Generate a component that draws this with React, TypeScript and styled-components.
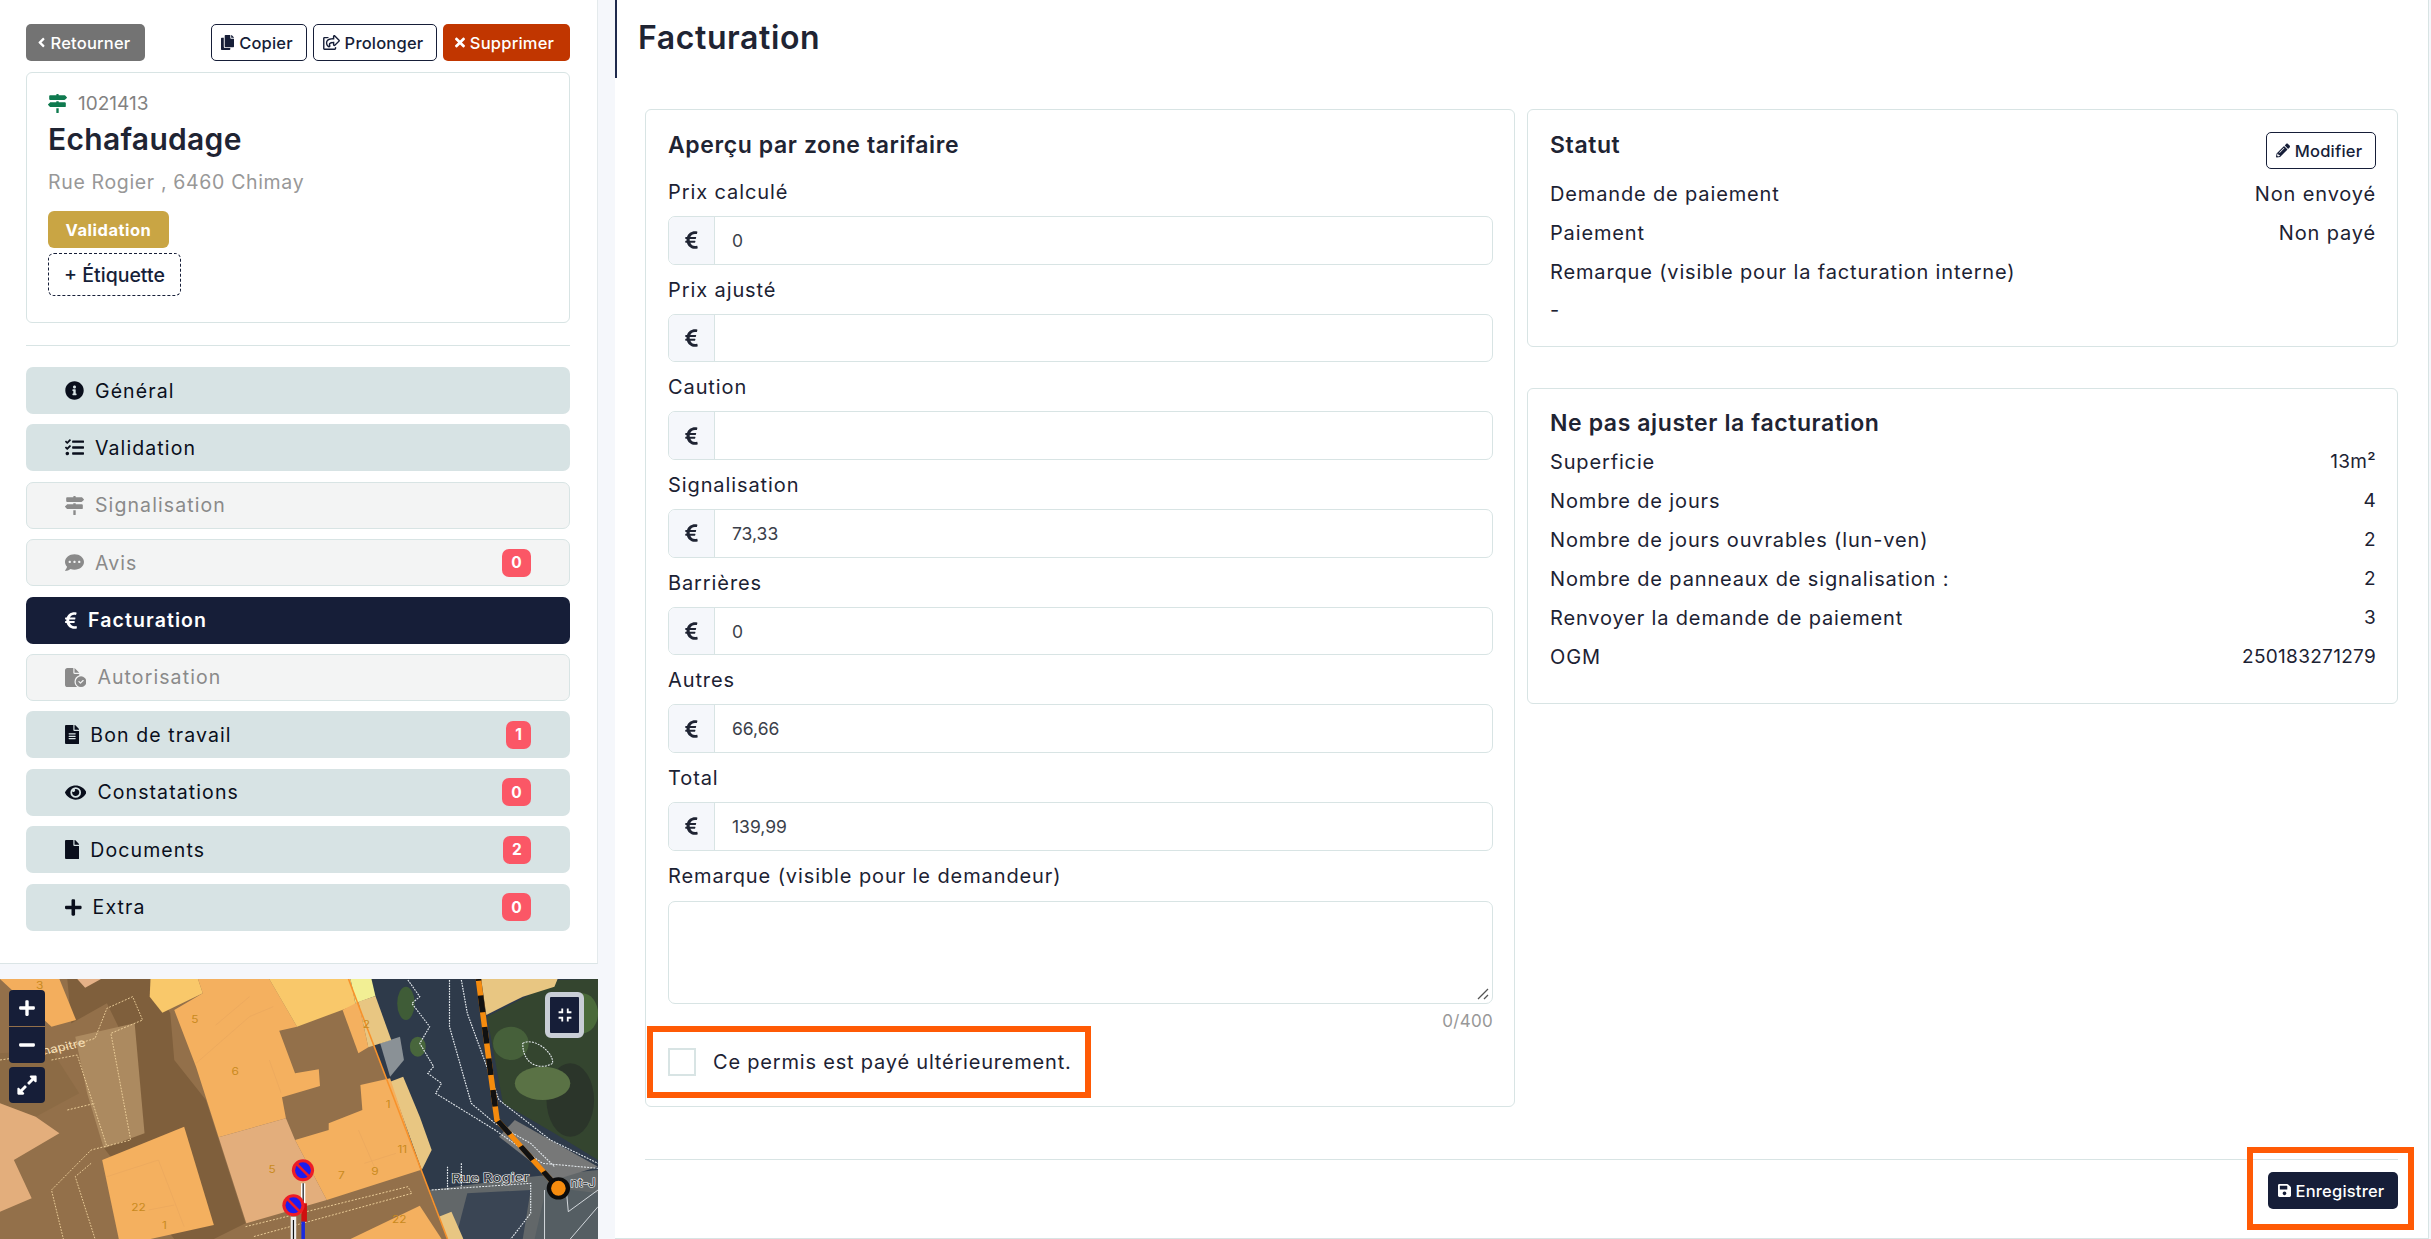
import React from "react";
import styled, { createGlobalStyle } from "styled-components";
import {
  FaAngleLeft, FaCopy, FaRegShareSquare, FaTimes, FaMapSigns, FaInfoCircle, FaTasks,
  FaCommentDots, FaEuroSign, FaFileAlt, FaEye, FaFile, FaPlus, FaMinus, FaSave, FaPencilAlt, FaExpandAlt,
} from "react-icons/fa";
import { FaFileCircleCheck } from "react-icons/fa6";
import { MdFullscreenExit } from "react-icons/md";

const Global = createGlobalStyle`
  html, body { margin: 0; padding: 0; }
  body { font-family: Inter, "Liberation Sans", sans-serif; color: #1c2233; background: #f5f7fb; }
  * { box-sizing: border-box; }
`;

const Page = styled.div`
  display: flex;
  width: 2431px;
  height: 1239px;
  overflow: hidden;
  background: #f5f7fb;
`;
const Sidebar = styled.aside`
  width: 598px;
  flex: none;
  display: flex;
  flex-direction: column;
  gap: 15px;
`;
const SideTop = styled.div`
  height: 964px;
  background: #fff;
  padding: 24px 27px 0 26px;
  border-bottom: 1px solid #dbe5e6;
  border-right: 1px solid #e4eaec;
`;
const TopBar = styled.div`
  display: flex;
  justify-content: space-between;
  align-items: center;
  height: 37px;
`;
const BtnGroup = styled.div`
  display: flex;
  gap: 6px;
`;
const Btn = styled.button<{ $w: number; $iw: number; $kind: "gray" | "outline" | "danger" | "navy" }>`
  width: ${(p) => p.$w}px;
  height: 37px;
  display: inline-flex;
  align-items: center;
  justify-content: center;
  gap: 5px;
  padding: 0 4px 0 0;
  border-radius: 5px;
  font: 500 16.5px Inter, sans-serif;
  letter-spacing: 0.2px;
  white-space: nowrap;
  border: 1px solid ${(p) => (p.$kind === "outline" ? "#161e38" : "transparent")};
  color: ${(p) => (p.$kind === "outline" ? "#161e38" : "#fff")};
  background: ${(p) =>
    p.$kind === "gray" ? "#737373" : p.$kind === "danger" ? "#c13600" : p.$kind === "navy" ? "#161e38" : "#fff"};
  svg { width: ${(p) => p.$iw}px; height: 15px; flex: none; }
`;
const StatusBtnSlot = styled.div`
  margin-top: 5px;
`;
const InfoCard = styled.section`
  margin-top: 11px;
  height: 251px;
  border: 1px solid #d8e4e4;
  border-radius: 6px;
  padding: 17px 21px;
`;
const IdLine = styled.div`
  display: flex;
  align-items: center;
  gap: 11px;
  height: 26px;
  font-size: 19px;
  color: #828282;
  svg { color: #0f7a4f; width: 19px; height: 19px; }
`;
const ItemTitle = styled.h2`
  margin: 3px 0 0;
  font-size: 30px;
  line-height: 40px;
  letter-spacing: 0.3px;
  font-weight: 600;
  color: #1f2433;
`;
const Address = styled.div`
  margin-top: 8px;
  font-size: 19.5px;
  line-height: 30px;
  letter-spacing: 0.65px;
  color: #989898;
`;
const StatusPill = styled.div`
  margin-top: 14px;
  width: 121px;
  height: 37px;
  border-radius: 6px;
  background: #c9a544;
  color: #fff;
  font-size: 16.5px;
  letter-spacing: 0.5px;
  font-weight: 700;
  display: flex;
  align-items: center;
  justify-content: center;
`;
const TagBtn = styled.div`
  margin-top: 5px;
  width: 133px;
  height: 43px;
  border: 1px dashed #161e38;
  border-radius: 6px;
  font-size: 19.5px;
  font-weight: 500;
  color: #161e38;
  display: flex;
  align-items: center;
  justify-content: center;
`;
const Rule = styled.hr`
  margin: 22px 0 21px;
  border: 0;
  border-top: 1px solid #d8e4e4;
`;
const Nav = styled.nav`
  display: flex;
  flex-direction: column;
  gap: 10.4px;
`;
const NavItem = styled.div<{ $state: "on" | "off" | "active" }>`
  height: 47px;
  display: flex;
  align-items: center;
  gap: 11px;
  padding: 0 38px;
  border-radius: 7px;
  font-size: 19.5px;
  letter-spacing: 1.1px;
  font-weight: ${(p) => (p.$state === "active" ? 600 : 400)};
  color: ${(p) => (p.$state === "active" ? "#fff" : p.$state === "off" ? "#8a8a8a" : "#0a0f1c")};
  background: ${(p) => (p.$state === "active" ? "#161e38" : p.$state === "off" ? "#f3f4f4" : "#d7e3e4")};
  border: 1px solid ${(p) => (p.$state === "off" ? "#d8e4e4" : "transparent")};
`;
const NavIcon = styled.span<{ $w: number }>`
  flex: none;
  display: flex;
  width: ${(p) => p.$w}px;
  svg { width: 100%; height: 19px; }
`;
const NavLabel = styled.span`
  flex: 1;
`;
const Badge = styled.span<{ $w: number }>`
  width: ${(p) => p.$w}px;
  height: 28px;
  border-radius: 7px;
  background: #fb5766;
  color: #fff;
  font-size: 15.5px;
  font-weight: 700;
  letter-spacing: 0;
  display: flex;
  align-items: center;
  justify-content: center;
`;
const MapBox = styled.div`
  position: relative;
  flex: 1;
  overflow: hidden;
  svg.map { display: block; width: 100%; height: 100%; }
`;
const ZoomStack = styled.div`
  position: absolute;
  left: 9px;
  top: 11px;
  display: flex;
  flex-direction: column;
`;
const MapBtn = styled.div<{ $gap?: number; $round?: string; $icon?: number }>`
  width: 36px;
  height: 36px;
  background: #161e38;
  color: #fff;
  display: flex;
  align-items: center;
  justify-content: center;
  font-size: ${(p) => p.$icon ?? 18}px;
  margin-top: ${(p) => p.$gap ?? 0}px;
  border-radius: ${(p) => p.$round ?? "4px"};
`;
const CompressBtn = styled.div`
  position: absolute;
  left: 545px;
  top: 13px;
  width: 39px;
  height: 46px;
  border: 5px solid #c9ced6;
  border-radius: 6px;
  background: #161e38;
  color: #fff;
  display: flex;
  align-items: center;
  justify-content: center;
  font-size: 22px;
`;

const Main = styled.main`
  position: relative;
  margin-left: 17px;
  width: 1814px;
  height: 1239px;
  background: #fff;
  border-right: 1px solid #d8e4e4;
  border-bottom: 1px solid #d8e4e4;
  padding: 0 30px 0 30px;
  &::before {
    content: "";
    position: absolute;
    left: 0;
    top: 0;
    width: 2px;
    height: 78px;
    background: #1f2a4d;
  }
`;
const PageTitle = styled.h1`
  margin: 0 0 0 -7px;
  height: 109px;
  padding-top: 18px;
  font-size: 32px;
  line-height: 40px;
  letter-spacing: 0.6px;
  font-weight: 600;
  color: #1f2433;
`;
const Columns = styled.div`
  display: grid;
  grid-template-columns: 870px 871px;
  gap: 12px;
  align-items: start;
  height: 998px;
`;
const Stack = styled.div`
  display: flex;
  flex-direction: column;
  gap: 41px;
`;
const Card = styled.section<{ $h: number; $pt?: number }>`
  height: ${(p) => p.$h}px;
  border: 1px solid #d8e4e4;
  border-radius: 6px;
  padding: ${(p) => p.$pt ?? 17}px 21px 0 22px;
`;
const CardTitle = styled.h3<{ $mb?: number }>`
  margin: 0 0 ${(p) => p.$mb ?? 0}px;
  font-size: 23px;
  line-height: 36px;
  letter-spacing: 0.6px;
  font-weight: 600;
  color: #1f2433;
`;
const Field = styled.div`
  margin-bottom: 9px;
`;
const Label = styled.label<{ $mb?: number }>`
  display: block;
  height: 30px;
  margin-bottom: ${(p) => p.$mb ?? 10}px;
  font-size: 20px;
  line-height: 32px;
  letter-spacing: 0.9px;
`;
const InputGroup = styled.div`
  display: flex;
  height: 48.7px;
  border: 1px solid #d8e4e4;
  border-radius: 7px;
  overflow: hidden;
`;
const Addon = styled.div`
  width: 46px;
  flex: none;
  background: #f5f7fb;
  border-right: 1px solid #d8e4e4;
  display: flex;
  align-items: center;
  justify-content: center;
  color: #1f2433;
  svg { width: 13px; height: 20px; }
`;
const Value = styled.div`
  flex: 1;
  display: flex;
  align-items: center;
  padding-left: 17px;
  font-size: 17.5px;
  color: #3b3f4a;
`;
const TextArea = styled.div`
  position: relative;
  height: 103px;
  margin-top: 11px;
  border: 1px solid #d8e4e4;
  border-radius: 7px;
  svg { position: absolute; right: 2px; bottom: 2px; }
`;
const Counter = styled.div`
  text-align: right;
  margin-top: 5px;
  font-size: 17px;
  line-height: 24px;
  color: #989898;
  letter-spacing: 0.3px;
`;
const CheckRow = styled.div`
  position: relative;
  display: flex;
  align-items: center;
  gap: 17px;
  height: 28px;
  margin-top: 15px;
  font-size: 20px;
  letter-spacing: 0.8px;
`;
const CheckBox = styled.span`
  width: 28px;
  height: 28px;
  border: 2px solid #d8e4e4;
`;
const Highlight = styled.div<{ $l: number; $t: number; $w: number; $h: number }>`
  position: absolute;
  left: ${(p) => p.$l}px;
  top: ${(p) => p.$t}px;
  width: ${(p) => p.$w}px;
  height: ${(p) => p.$h}px;
  border: 6px solid #ff5a05;
  pointer-events: none;
`;
const StatHead = styled.div`
  display: flex;
  justify-content: space-between;
  align-items: flex-start;
  height: 47px;
`;
const Row = styled.div<{ $h?: number }>`
  display: flex;
  justify-content: space-between;
  align-items: center;
  height: ${(p) => p.$h ?? 39}px;
  font-size: 20px;
  letter-spacing: 0.85px;
`;
const Figure = styled.span`
  font-size: 19px;
  letter-spacing: 0.3px;
`;
const Footer = styled.div`
  position: relative;
  margin-top: 52px;
  border-top: 1px solid #d8e4e4;
  padding-top: 12px;
  display: flex;
  justify-content: flex-end;
`;

const fields: [string, string][] = [
  ["Prix calculé", "0"],
  ["Prix ajusté", ""],
  ["Caution", ""],
  ["Signalisation", "73,33"],
  ["Barrières", "0"],
  ["Autres", "66,66"],
  ["Total", "139,99"],
];
const nav = [
  { l: "Général", i: <FaInfoCircle />, iw: 19, s: "on" },
  { l: "Validation", i: <FaTasks />, iw: 19, s: "on" },
  { l: "Signalisation", i: <FaMapSigns />, iw: 19, s: "off" },
  { l: "Avis", i: <FaCommentDots />, iw: 19, s: "off", b: "0", w: 29 },
  { l: "Facturation", i: <FaEuroSign />, iw: 12, s: "active" },
  { l: "Autorisation", i: <FaFileCircleCheck />, iw: 21.4, s: "off" },
  { l: "Bon de travail", i: <FaFileAlt />, iw: 14.3, s: "on", b: "1", w: 25 },
  { l: "Constatations", i: <FaEye />, iw: 21.4, s: "on", b: "0", w: 29 },
  { l: "Documents", i: <FaFile />, iw: 14.3, s: "on", b: "2", w: 28 },
  { l: "Extra", i: <FaPlus />, iw: 16.6, s: "on", b: "0", w: 29 },
] as const;

const MapArt = () => (
  <svg className="map" viewBox="0 57 1510 780" preserveAspectRatio="none">
    <rect x="0" y="57" width="1510" height="780" fill="#2e3a4a" />
    <polygon points="1230,170 1410,60 1510,57 1510,600 1400,520 1270,430" fill="#34452f" />
    <ellipse cx="1440" cy="420" rx="60" ry="110" fill="#2b352a" />
    <ellipse cx="1370" cy="370" rx="70" ry="50" fill="#5a7245" />
    <ellipse cx="1290" cy="250" rx="45" ry="50" fill="#46603a" />
    <ellipse cx="1470" cy="160" rx="40" ry="60" fill="#4a6a3a" />
    <ellipse cx="1025" cy="130" rx="22" ry="50" fill="#3f5c37" />
    <ellipse cx="1055" cy="260" rx="20" ry="30" fill="#48663c" />
    <polygon points="960,250 1010,230 1020,300 985,350" fill="#8a9196" />
    <polygon points="1085,690 1340,650 1510,630 1510,837 1300,837 1130,837" fill="#626769" />
    <polygon points="1300,480 1510,620 1400,660 1260,530" fill="#777878" />
    <polygon points="1380,680 1510,700 1510,837 1350,837" fill="#555e63" />
    <polygon points="1180,700 1340,690 1320,837 1150,837" fill="#3a4554" />
    <polygon points="0,57 880,57 1130,837 0,837" fill="#93704a" />
    <polygon points="170,57 380,57 430,160 440,300 520,420 620,790 540,837 440,837 260,560 350,500 340,300 270,130 180,190" fill="#7f5f3c" />
    <polygon points="190,230 340,190 365,520 262,565 220,400" fill="#ac8a60" />
    <polygon points="0,280 130,270 200,400 90,470 0,430" fill="#8c6b45" />
    <polygon points="0,57 150,57 192,180 130,200" fill="#f3ae5d" />
    <polygon points="195,57 255,57 215,83" fill="#e5b187" />
    <polygon points="380,57 500,57 512,100 410,158 378,110" fill="#f9c86a" />
    <polygon points="440,150 512,100 500,57 680,57 750,200 705,212 745,340 805,328 808,378 712,412 722,475 552,532 495,320" fill="#f4b05f" />
    <polygon points="680,57 885,57 898,135 750,200" fill="#f9c86a" />
    <polygon points="885,57 938,57 948,108 898,130" fill="#f2ef94" />
    <polygon points="905,125 948,108 988,240 930,262" fill="#e8c682" />
    <polygon points="865,150 905,125 930,262 905,280" fill="#f4b05f" />
    <polygon points="985,365 1018,350 1060,470 1090,570 1065,630" fill="#e8c682" />
    <polygon points="910,375 985,355 1062,630 825,720 745,540 830,510 830,490 915,450" fill="#f4b05f" />
    <polygon points="552,532 722,475 745,540 825,720 622,790" fill="#e3ae7c" />
    <polygon points="0,430 90,470 150,520 35,600 80,715 0,755" fill="#e3ae7c" />
    <polygon points="258,600 465,500 540,795 380,837 300,837" fill="#f4b05f" />
    <polygon points="885,837 1060,737 1115,837" fill="#f4b05f" />
    <polygon points="1108,770 1140,755 1170,837 1130,837" fill="#e8c682" />
    <polygon points="1215,57 1408,57 1400,80 1320,110 1228,165" fill="#e8c682" />
    <g fill="none" stroke="#e8a55d" strokeWidth="1.5">
      <path d="M495,310 L630,170 L690,140 M545,195 L630,110 M680,300 L710,400 M905,510 L945,620 M920,610 L1000,580" />
      <path d="M270,650 L400,600 L465,800 M375,750 L440,735" />
    </g>
    <g fill="none" stroke="#f2d49e" strokeWidth="2.5" strokeDasharray="5 4">
      <path d="M0,300 L120,280 L240,235 L270,145 L335,110 L360,180 L280,220 L330,540 L230,570 L130,690 L160,837" />
      <path d="M130,300 L195,285 L270,560 M170,450 L240,430 M230,610 L190,650 L240,837" />
      <path d="M620,800 L1030,680 L1040,700 L640,830" />
    </g>
    <g fill="none" stroke="#e6ebef" strokeWidth="3" strokeDasharray="5 3">
      <path d="M1030,60 L1060,110 L1040,130 L1085,200 L1060,250 L1095,320 L1080,340 L1115,370 L1100,400 L1250,510 L1370,610 L1510,625" />
      <path d="M1135,60 L1135,200 L1190,430 L1250,490 L1340,550 L1400,620" />
      <path d="M1165,60 L1180,160 L1260,420 L1390,540 L1510,610" />
      <path d="M1320,250 C1350,230 1400,280 1395,310 C1370,330 1320,320 1320,250 Z" />
      <path d="M1130,620 L1130,690 M1165,610 L1165,680 M1090,690 L1340,670 L1340,760 L1290,837" />
    </g>
    <g fill="none" stroke="#dfe4e8" strokeWidth="2.5">
      <path d="M1435,755 L1510,690 M1435,755 L1430,690 M1375,837 L1375,690 M1440,837 L1510,740" />
    </g>
    <line x1="880" y1="57" x2="1130" y2="837" stroke="#f8922b" strokeWidth="4" />
    <polyline points="1208,57 1240,350 1255,480 1410,685" fill="none" stroke="#f58b0e" strokeWidth="14" />
    <polyline points="1208,57 1240,350 1255,480 1410,685" fill="none" stroke="#111" strokeWidth="14" strokeDasharray="50 45" strokeDashoffset="-50" />
    <g fontFamily="Inter, sans-serif" fill="#c98a20" fontSize="30">
      <text x="100" y="86" textAnchor="middle">3</text>
      <text x="492" y="188" textAnchor="middle">5</text>
      <text x="594" y="346" textAnchor="middle">6</text>
      <text x="925" y="204" textAnchor="middle">2</text>
      <text x="980" y="444" textAnchor="middle">1</text>
      <text x="1016" y="579" textAnchor="middle">11</text>
      <text x="687" y="638" textAnchor="middle">5</text>
      <text x="862" y="658" textAnchor="middle">7</text>
      <text x="947" y="644" textAnchor="middle">9</text>
      <text x="350" y="752" textAnchor="middle">22</text>
      <text x="415" y="807" textAnchor="middle">1</text>
      <text x="1008" y="790" textAnchor="middle">22</text>
    </g>
    <text x="110" y="285" fontFamily="Inter, sans-serif" fontSize="34" fill="#f6dfb5" transform="rotate(-14 110 285)">hapitre</text>
    <text x="1140" y="668" fontFamily="Inter, sans-serif" fontSize="38" fontWeight="500" fill="#3a3f44" stroke="#fff" strokeWidth="3" paintOrder="stroke" transform="rotate(-1 1140 668)">Rue Rogier</text>
    <text x="1440" y="682" fontFamily="Inter, sans-serif" fontSize="34" fill="#3a3f44" stroke="#fff" strokeWidth="3" paintOrder="stroke">nt-J</text>
    <rect x="760" y="670" width="11" height="60" fill="#fff" />
    <line x1="765.5" y1="670" x2="765.5" y2="725" stroke="#111" strokeWidth="3" />
    <rect x="761" y="730" width="14" height="55" fill="#d01010" />
    <rect x="761" y="785" width="9" height="52" fill="#1a2ae0" />
    <rect x="734" y="770" width="14" height="67" fill="#eee" />
    <line x1="741" y1="780" x2="741" y2="837" stroke="#111" strokeWidth="3" />
    {[[765, 631], [741, 736]].map(([x, y]) => (
      <g key={x}>
        <ellipse cx={x} cy={y} rx="28" ry="33" fill="#ee1c25" />
        <ellipse cx={x} cy={y} rx="20" ry="24" fill="#1c1cf0" />
        <line x1={x - 15} y1={y - 18} x2={x + 15} y2={y + 18} stroke="#ee1c25" strokeWidth="7" />
      </g>
    ))}
    <ellipse cx="1410" cy="685" rx="24" ry="28" fill="#f58b0e" stroke="#0c0c0c" strokeWidth="11" />
  </svg>
);

export default function App() {
  return (
    <Page>
      <Global />
      <Sidebar>
        <SideTop>
          <TopBar>
            <Btn $w={119} $iw={9} $kind="gray">
              <FaAngleLeft /> Retourner
            </Btn>
            <BtnGroup>
              <Btn $w={96} $iw={13} $kind="outline">
                <FaCopy /> Copier
              </Btn>
              <Btn $w={124} $iw={17} $kind="outline">
                <FaRegShareSquare /> Prolonger
              </Btn>
              <Btn $w={127} $iw={10} $kind="danger">
                <FaTimes /> Supprimer
              </Btn>
            </BtnGroup>
          </TopBar>
          <InfoCard>
            <IdLine>
              <FaMapSigns /> 1021413
            </IdLine>
            <ItemTitle>Echafaudage</ItemTitle>
            <Address>Rue Rogier , 6460 Chimay</Address>
            <StatusPill>Validation</StatusPill>
            <TagBtn>+ Étiquette</TagBtn>
          </InfoCard>
          <Rule />
          <Nav>
            {nav.map((n) => (
              <NavItem key={n.l} $state={n.s}>
                <NavIcon $w={n.iw}>{n.i}</NavIcon>
                <NavLabel>{n.l}</NavLabel>
                {"b" in n && <Badge $w={n.w}>{n.b}</Badge>}
              </NavItem>
            ))}
          </Nav>
        </SideTop>
        <MapBox>
          <MapArt />
          <ZoomStack>
            <MapBtn $round="4px 4px 0 0">
              <FaPlus />
            </MapBtn>
            <MapBtn $round="0 0 4px 4px" $gap={1}>
              <FaMinus />
            </MapBtn>
            <MapBtn $gap={4} $icon={22}>
              <FaExpandAlt />
            </MapBtn>
          </ZoomStack>
          <CompressBtn>
            <MdFullscreenExit />
          </CompressBtn>
        </MapBox>
      </Sidebar>
      <Main>
        <PageTitle>Facturation</PageTitle>
        <Columns>
          <Card $h={998}>
            <CardTitle $mb={13}>Aperçu par zone tarifaire</CardTitle>
            {fields.map(([l, v]) => (
              <Field key={l}>
                <Label>{l}</Label>
                <InputGroup>
                  <Addon>
                    <FaEuroSign />
                  </Addon>
                  <Value>{v}</Value>
                </InputGroup>
              </Field>
            ))}
            <Label $mb={0}>Remarque (visible pour le demandeur)</Label>
            <TextArea>
              <svg width="14" height="14" viewBox="0 0 14 14">
                <path d="M12 2 L2 12 M12 8 L8 12" stroke="#555" strokeWidth="1.3" />
              </svg>
            </TextArea>
            <Counter>0/400</Counter>
            <CheckRow>
              <CheckBox />
              Ce permis est payé ultérieurement.
              <Highlight $l={-21} $t={-22} $w={444} $h={72} />
            </CheckRow>
          </Card>
          <Stack>
            <Card $h={238}>
              <StatHead>
                <CardTitle>Statut</CardTitle>
                <StatusBtnSlot>
                  <Btn $w={110} $iw={14} $kind="outline">
                    <FaPencilAlt /> Modifier
                  </Btn>
                </StatusBtnSlot>
              </StatHead>
              <Row>
                <span>Demande de paiement</span>
                <span>Non envoyé</span>
              </Row>
              <Row>
                <span>Paiement</span>
                <span>Non payé</span>
              </Row>
              <Row>
                <span>Remarque (visible pour la facturation interne)</span>
              </Row>
              <Row $h={38}>
                <span>-</span>
              </Row>
            </Card>
            <Card $h={316} $pt={16}>
              <CardTitle $mb={1}>Ne pas ajuster la facturation</CardTitle>
              <Row><span>Superficie</span><Figure>13m²</Figure></Row>
              <Row><span>Nombre de jours</span><Figure>4</Figure></Row>
              <Row><span>Nombre de jours ouvrables (lun-ven)</span><Figure>2</Figure></Row>
              <Row><span>Nombre de panneaux de signalisation :</span><Figure>2</Figure></Row>
              <Row><span>Renvoyer la demande de paiement</span><Figure>3</Figure></Row>
              <Row><span>OGM</span><Figure>250183271279</Figure></Row>
            </Card>
          </Stack>
        </Columns>
        <Footer>
          <Btn $w={130} $iw={13} $kind="navy">
            <FaSave /> Enregistrer
          </Btn>
          <Highlight $l={1602} $t={-13} $w={167} $h={83} />
        </Footer>
      </Main>
    </Page>
  );
}
